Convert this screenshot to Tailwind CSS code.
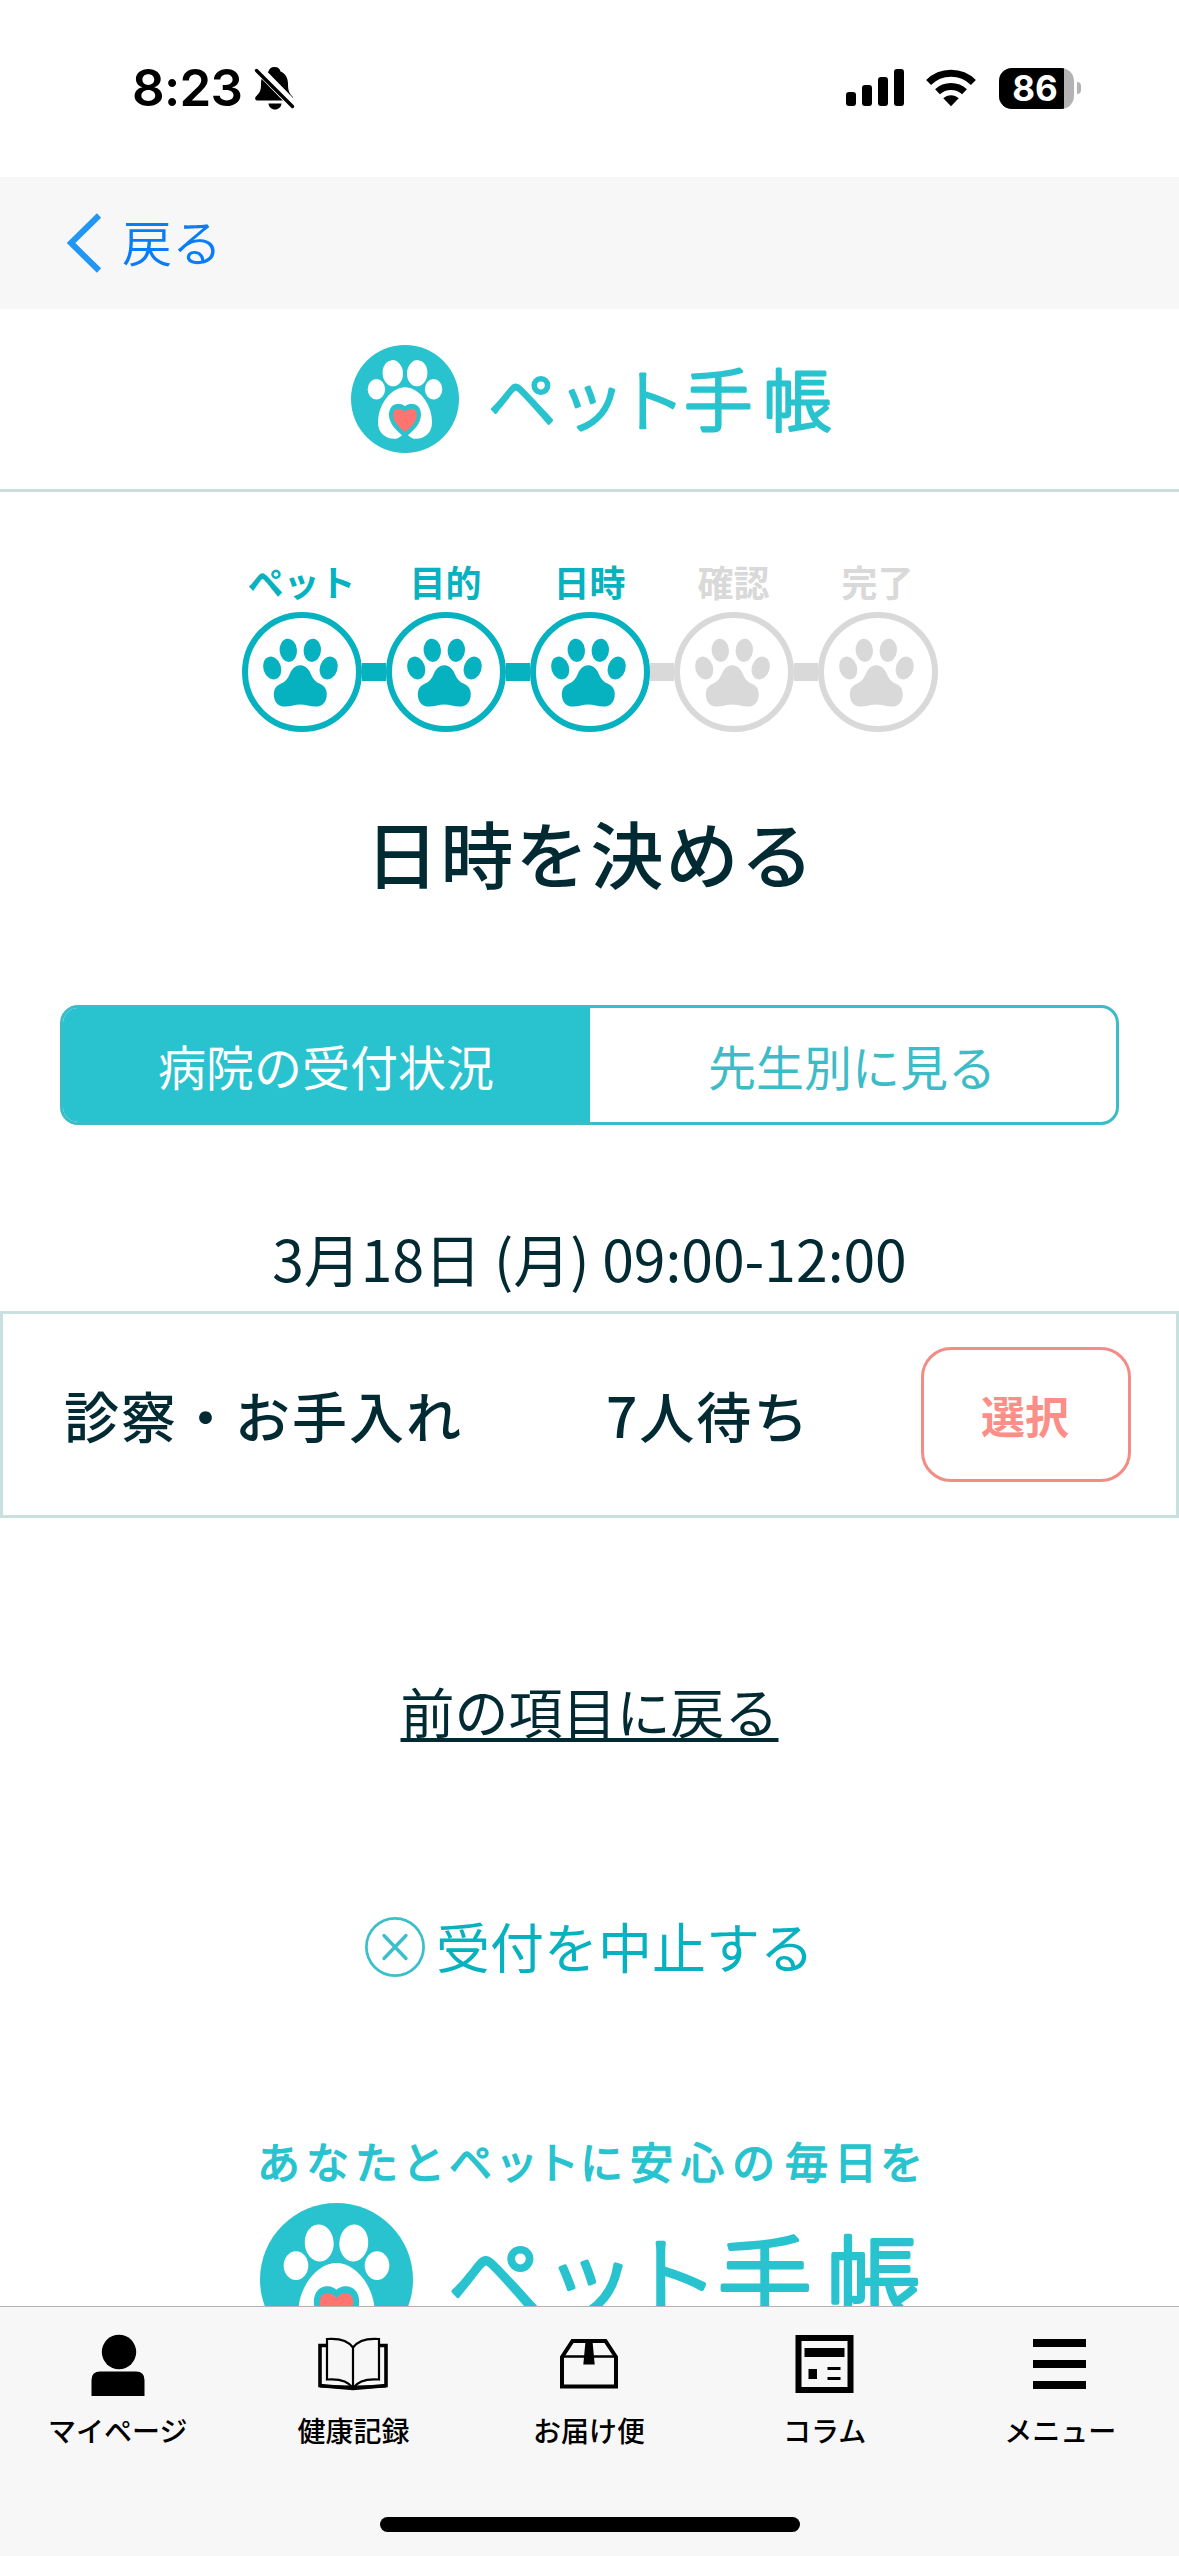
<!DOCTYPE html>
<html lang="ja">
<head>
<meta charset="utf-8">
<title>ペット手帳</title>
<script src="https://cdn.jsdelivr.net/npm/@tailwindcss/browser@4"></script>
</head>
<body class="bg-white">
<svg class="hidden">
  <symbol id="paw" viewBox="0 0 120 120">
    <g fill="currentColor">
      <ellipse cx="46.3" cy="38.3" rx="8.7" ry="11.6" transform="rotate(-5 46.3 38.3)"/>
      <ellipse cx="70.3" cy="38.3" rx="8.7" ry="11.6" transform="rotate(5 70.3 38.3)"/>
      <ellipse cx="30.2" cy="56" rx="8.8" ry="11.6" transform="rotate(-18 30.2 56)"/>
      <ellipse cx="86.7" cy="56" rx="8.8" ry="11.6" transform="rotate(18 86.7 56)"/>
      <path d="M58.3 53.3C53 53.3 50 57 48 61.5C45.5 67.5 43 69.7 39.5 71.3C34.5 73.6 31.8 77 31.8 82C31.8 90 36 94.6 43 94.6C49 94.6 53 92.6 58.3 92.6C63.6 92.6 67.6 94.6 73.6 94.6C80.6 94.6 84.8 90 84.8 82C84.8 77 82.1 73.6 77.1 71.3C73.6 69.7 71.1 67.5 68.6 61.5C66.6 57 63.6 53.3 58.3 53.3Z"/>
    </g>
  </symbol>
  <symbol id="mark" viewBox="0 0 108 108">
    <circle cx="54" cy="54" r="54" fill="#28c3ce"/>
    <g fill="#fff">
      <ellipse cx="41.8" cy="28.2" rx="10.2" ry="13.1" transform="rotate(-4 41.8 28.2)"/>
      <ellipse cx="66.2" cy="28.2" rx="10.2" ry="13.1" transform="rotate(4 66.2 28.2)"/>
      <ellipse cx="25.4" cy="44.2" rx="8.7" ry="10.2"/>
      <ellipse cx="82.6" cy="44.2" rx="8.7" ry="10.2"/>
      <path d="M54 42.3C67.5 42.3 81 59 81 77.5C81 88 73.5 93.7 65 93.7H43C34.500 93.700 27 88 27 77.500C27 59 40.500 42.300 54 42.300Z"/>
    </g>
    <path fill="#28c3ce" d="M54 87L50.5 90.800Q47 93.600 43 95H65Q61 93.600 57.500 90.800Z"/>
    <path fill="#28c3ce" d="M54 61.300C57 58 63 57.800 66.500 60.800C70.500 64.500 71 71 68.500 76.500C66 82.500 60 88 54 92.500C48 88 42 82.500 39.500 76.500C37 71 37.500 64.500 41.500 60.800C45 57.800 51 58 54 61.300Z"/>
    <path fill="#ff7470" d="M54 67.300C56 63.800 60.500 62.600 63.500 64.600C66.500 67 66.500 71.500 64.500 75.500C62.500 80 58 84 54 87C50 84 45.500 80 43.500 75.500C41.500 71.500 41.500 67 44.500 64.600C47.500 62.600 52 63.800 54 67.300Z"/>
  </symbol>
</svg>

<div class="flex h-[2556px] w-[1179px] flex-col overflow-hidden bg-white font-['Noto_Sans_CJK_JP',sans-serif] text-[#012a33]">

  <!-- status bar -->
  <div class="flex h-[177px] shrink-0 items-start justify-between pr-[98px] pl-[132px]">
    <div class="flex items-start pt-[58px]">
      <span class="w-[122px] font-['Inter',sans-serif] text-[51px] leading-[60px] font-semibold tracking-[-0.7px] text-black">8:23</span>
      <svg class="mt-[8px] h-[45px] w-[42px]" viewBox="0 0 42 45">
        <path d="M20.500 1C24 1 26 3 26.500 5.500C31.500 7.500 34 12 34 18C34 25 35.500 27.500 38.500 30.500C39.500 32 39.500 34.500 37.500 34.500H3.500C1 34.500 .5 32 2 30.500C6 26.500 7 24.500 7 18C7 12 9.500 7.500 14.500 5.500C15 3 17 1 20.500 1Z"/>
        <path d="M14.500 37.500H27.500C27.200 41 24.500 43.500 21 43.500C17.500 43.500 14.800 41 14.500 37.500Z"/>
        <path d="M1 -.5L41 40.500" stroke="#fff" stroke-width="9"/>
        <path d="M2.500 4.500L38.500 40.500" stroke="#000" stroke-width="3.400" stroke-linecap="round"/>
      </svg>
    </div>
    <div class="flex items-center gap-[22px] pt-[67px]">
      <svg class="h-[42px] w-[58px]" viewBox="0 0 58 42">
        <rect x="0" y="25" width="10" height="14" rx="3"/><rect x="16" y="18" width="10" height="21" rx="3"/><rect x="32" y="10" width="10" height="29" rx="3"/><rect x="48" y="2" width="10" height="37" rx="3"/>
      </svg>
      <svg class="h-[42px] w-[50px]" viewBox="0 0 50 42">
        <path d="M25 39.200L17.300 31.300C21.700 27.300 28.300 27.300 32.700 31.300Z"/>
        <path d="M11.500 24.700C19 17.600 31 17.600 38.500 24.700" fill="none" stroke="#000" stroke-width="7"/>
        <path d="M2.600 15.500C15 3.200 35 3.200 47.400 15.500" fill="none" stroke="#000" stroke-width="7"/>
      </svg>
      <div class="flex items-center gap-[3px] pl-[1px]">
        <div class="flex h-[41px] w-[75px] overflow-hidden rounded-[13px] bg-[#b3b3b3]">
          <span class="w-[65px] bg-black pl-[7px] text-center font-['Inter',sans-serif] text-[35px] leading-[41px] font-bold text-white">86</span>
        </div>
        <span class="h-[12px] w-[4px] rounded-r-full bg-[#b3b3b3]"></span>
      </div>
    </div>
  </div>

  <!-- navigation bar -->
  <div class="flex h-[132px] shrink-0 items-center gap-[20px] bg-[#f7f7f7] pl-[66px]">
    <svg class="h-[60px] w-[36px]" viewBox="0 0 36 60"><path d="M33 2.500L5 30L33 57.500" fill="none" stroke="#2196f3" stroke-width="6"/></svg>
    <span class="pb-[6px] text-[50px] leading-[60px] font-[350] text-[#0a7cf5]">戻る</span>
  </div>

  <main class="flex min-h-0 flex-1 flex-col items-center overflow-hidden">
    <header class="flex h-[183px] w-full shrink-0 items-start justify-center border-b-3 border-[#c9dfde] pt-[36px] pl-[6px]">
      <svg class="h-[108px] w-[108px]"><use href="#mark"/></svg>
      <svg class="ml-[25px] h-[108px] w-[350px]" viewBox="484 345 350 108">
        <text x="488 557 617 684 763" y="425.500" font-size="68.500" font-weight="300" fill="#28c3ce" stroke="#28c3ce" stroke-width="3" stroke-linejoin="round">ペット手帳</text>
      </svg>
    </header>

    <!-- progress -->
    <ol class="mt-[69px] flex shrink-0 text-[36px] leading-[40px] font-bold text-[#06b1c0]">
      <li class="flex w-[144px] flex-col"><span class="w-[120px] text-center whitespace-nowrap">ペット</span>
        <div class="mt-[11px] flex items-center"><div class="h-[120px] w-[120px] rounded-full border-6 border-current"><svg class="-m-[6px] h-[120px] w-[120px]"><use href="#paw"/></svg></div><i class="h-[18px] w-[24px] bg-current"></i></div></li>
      <li class="flex w-[144px] flex-col"><span class="w-[120px] text-center">目的</span>
        <div class="mt-[11px] flex items-center"><div class="h-[120px] w-[120px] rounded-full border-6 border-current"><svg class="-m-[6px] h-[120px] w-[120px]"><use href="#paw"/></svg></div><i class="h-[18px] w-[24px] bg-current"></i></div></li>
      <li class="flex w-[144px] flex-col"><span class="w-[120px] text-center">日時</span>
        <div class="mt-[11px] flex items-center"><div class="h-[120px] w-[120px] rounded-full border-6 border-current"><svg class="-m-[6px] h-[120px] w-[120px]"><use href="#paw"/></svg></div><i class="h-[18px] w-[24px] bg-[#d9d9d9]"></i></div></li>
      <li class="flex w-[144px] flex-col text-[#d9d9d9]"><span class="w-[120px] text-center">確認</span>
        <div class="mt-[11px] flex items-center"><div class="h-[120px] w-[120px] rounded-full border-6 border-current"><svg class="-m-[6px] h-[120px] w-[120px]"><use href="#paw"/></svg></div><i class="h-[18px] w-[24px] bg-current"></i></div></li>
      <li class="flex w-[120px] flex-col text-[#d9d9d9]"><span class="w-[120px] text-center">完了</span>
        <div class="mt-[11px] flex items-center"><div class="h-[120px] w-[120px] rounded-full border-6 border-current"><svg class="-m-[6px] h-[120px] w-[120px]"><use href="#paw"/></svg></div></div></li>
    </ol>

    <h1 class="mt-[69px] h-[100px] shrink-0 pl-[2px] text-[73px] leading-[100px] font-medium tracking-[2px]">日時を決める</h1>

    <div class="mt-[104px] flex h-[120px] w-[1059px] shrink-0 overflow-hidden rounded-[18px] border-3 border-[#3cbcc7] text-center text-[48px] leading-[114px]">
      <div class="-my-[3px] -ml-[3px] w-[530px] bg-[#28c3ce] pt-[3px] pl-[2px] text-white">病院の受付状況</div>
      <div class="flex-1 pr-[2px] text-[#3cbcc7]">先生別に見る</div>
    </div>

    <p class="mt-[92px] h-[80px] shrink-0 text-[57px] leading-[80px] whitespace-nowrap">3月18日 (月) 09:00-12:00</p>

    <div class="mt-[14px] flex h-[207px] w-full shrink-0 items-center border-3 border-[#c9e0e1] pr-[45px] pl-[61px] text-[55px] leading-[80px] font-medium tracking-[2px] whitespace-nowrap">
      <span class="w-[542px] pb-[2px]">診察・お手入れ</span>
      <span class="flex-1 pb-[2px]">7人待ち</span>
      <button class="h-[135px] w-[210px] rounded-[30px] border-3 border-[#f48c86] pr-[2px] text-center text-[44px] leading-[60px] font-bold tracking-normal text-[#fc8d87]">選択</button>
    </div>

    <a class="mt-[153px] h-[80px] shrink-0 text-[54px] leading-[80px] underline decoration-[4px] underline-offset-[4px] [text-decoration-skip-ink:none]">前の項目に戻る</a>

    <div class="mt-[166px] flex h-[60px] shrink-0 items-center gap-[11px] text-[54px] leading-[60px] text-[#06b1c0]">
      <svg class="h-[60px] w-[60px]" viewBox="0 0 60 60" fill="none" stroke="#3cbfca">
        <circle cx="30" cy="30" r="28.600" stroke-width="2.700"/>
        <path d="M19 18.500L41 41.500M41 18.500L19 41.500" stroke-width="3.400" stroke-linecap="round"/>
      </svg>
      <span class="pb-[3px]">受付を中止する</span>
    </div>

    <footer class="mt-[153px] flex shrink-0 flex-col pr-[2px]">
      <svg class="h-[73px] w-[680px]" viewBox="249 2130 680 73">
        <text text-anchor="start" x="257 306 355 402 449 495 536 580 630 681 732 785 834 880" y="2179" font-size="43" font-weight="400" fill="#28c3ce" stroke="#28c3ce" stroke-width="1.500" stroke-linejoin="round">あなたとペットに安心の毎日を</text>
      </svg>
      <div class="flex pl-[11px]">
        <svg class="h-[153px] w-[153px]"><use href="#mark"/></svg>
        <svg class="ml-[29px] h-[149px] w-[482px]" viewBox="484 344.500 350 108">
          <text x="488 557 617 684 763" y="426" font-size="68.500" font-weight="300" fill="#28c3ce" stroke="#28c3ce" stroke-width="3" stroke-linejoin="round">ペット手帳</text>
        </svg>
      </div>
    </footer>
  </main>

  <!-- tab bar -->
  <nav class="flex h-[250px] shrink-0 flex-col items-center border-t border-[#b2b2b2] bg-[#f7f7f7] text-black">
    <div class="grid w-full grid-cols-5 justify-items-center pt-[25px] pr-[1px] text-[28px] leading-[40px] font-medium">
      <div class="flex flex-col items-center gap-[12px]">
        <svg class="h-[66px] w-[72px]" viewBox="0 0 72 66"><circle cx="37" cy="20" r="17.200"/><path d="M9.500 64V48Q9.500 39.500 18 39.500H54Q62.500 39.500 62.500 48V64Z"/></svg>
        <span>マイページ</span>
      </div>
      <div class="flex flex-col items-center gap-[12px]">
        <svg class="h-[66px] w-[72px]" viewBox="0 0 72 66" fill="none" stroke="#000">
          <path d="M10 13.500H3V53.500L36 56.500L69 53.500V13.500H62" stroke-width="3.600"/>
          <path d="M3 53L36 53.500L69 53V55.500L38 57H34L3 55.500Z" fill="#000" stroke="none"/>
          <path d="M36 15.500C31 8.500 22 6 10 7V47.500C22 46.500 31 49 36 56C41 49 50 46.500 62 47.500V7C50 6 41 8.500 36 15.500V56" fill="#f7f7f7" stroke-width="2.200"/>
        </svg>
        <span>健康記録</span>
      </div>
      <div class="flex flex-col items-center gap-[12px]">
        <svg class="h-[66px] w-[72px]" viewBox="0 0 72 66" fill="none" stroke="#000">
          <path d="M9 25L19.500 9H52.500L63 25V54.500H9Z" stroke-width="4"/>
          <path d="M9 24.500H63" stroke-width="2.400"/>
          <path d="M32.500 9H39.500L41.700 32.500H30.300Z" fill="#000" stroke="none"/>
        </svg>
        <span>お届け便</span>
      </div>
      <div class="flex flex-col items-center gap-[12px]">
        <svg class="h-[66px] w-[72px]" viewBox="0 0 72 66">
          <rect x="9.500" y="6" width="52" height="52" fill="none" stroke="#000" stroke-width="6"/>
          <path d="M15.500 16H55.500V25H15.500ZM19.500 37H28V47H19.500ZM38.500 35H51.500V38H38.500ZM38.500 45H51.500V48H38.500Z"/>
        </svg>
        <span>コラム</span>
      </div>
      <div class="flex flex-col items-center gap-[12px]">
        <svg class="h-[66px] w-[72px]" viewBox="0 0 72 66"><path d="M9 7H62V15H9ZM9 28H62V36H9ZM9 49H62V57H9Z"/></svg>
        <span>メニュー</span>
      </div>
    </div>
    <div class="mt-[67px] h-[15px] w-[420px] rounded-full bg-black"></div>
  </nav>
</div>
</body>
</html>
